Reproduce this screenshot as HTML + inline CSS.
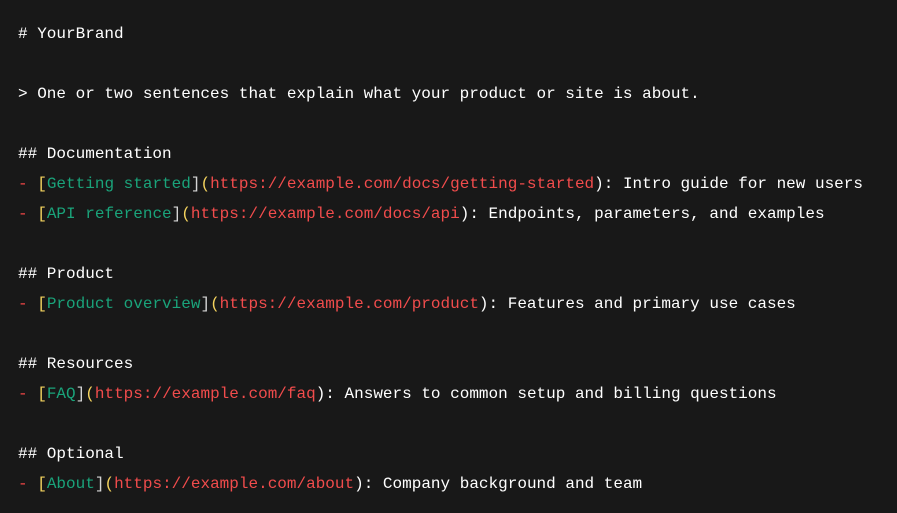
<!DOCTYPE html>
<html><head><meta charset="utf-8"><style>
html,body{margin:0;padding:0;background:#181818;width:897px;height:513px;overflow:hidden}
pre{margin:0;position:absolute;left:18px;top:19px;font-family:"Liberation Mono",monospace;font-size:16px;line-height:30px;color:#ffffff;white-space:pre}
.d{color:#f44747}.u{color:#f14c4c}.t{color:#1aa37a}.b{color:#f4d35e}.c{color:#d4d4d4}
</style></head><body><pre># YourBrand

&gt; One or two sentences that explain what your product or site is about.

## Documentation
<span class="d">-</span> <span class="b">[</span><span class="t">Getting started</span><span class="c">]</span><span class="b">(</span><span class="u">https://example.com/docs/getting-started</span>): Intro guide for new users
<span class="d">-</span> <span class="b">[</span><span class="t">API reference</span><span class="c">]</span><span class="b">(</span><span class="u">https://example.com/docs/api</span>): Endpoints, parameters, and examples

## Product
<span class="d">-</span> <span class="b">[</span><span class="t">Product overview</span><span class="c">]</span><span class="b">(</span><span class="u">https://example.com/product</span>): Features and primary use cases

## Resources
<span class="d">-</span> <span class="b">[</span><span class="t">FAQ</span><span class="c">]</span><span class="b">(</span><span class="u">https://example.com/faq</span>): Answers to common setup and billing questions

## Optional
<span class="d">-</span> <span class="b">[</span><span class="t">About</span><span class="c">]</span><span class="b">(</span><span class="u">https://example.com/about</span>): Company background and team</pre></body></html>
